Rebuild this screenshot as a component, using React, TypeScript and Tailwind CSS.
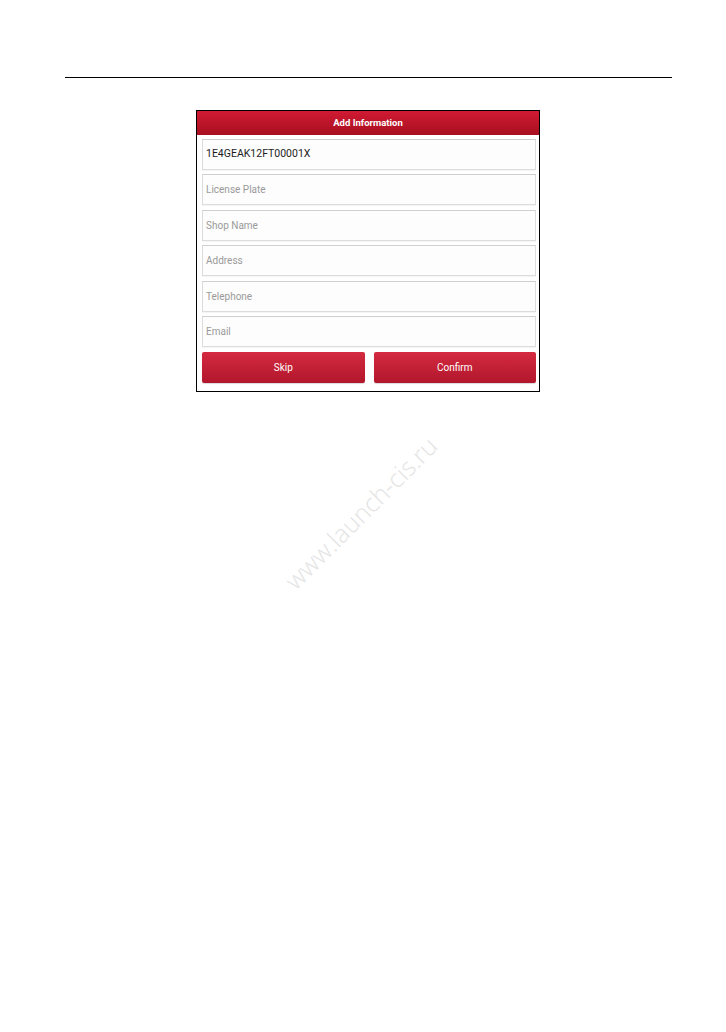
import React from "react";

const fields = [
  { text: "1E4GEAK12FT00001X", filled: true },
  { text: "License Plate" },
  { text: "Shop Name" },
  { text: "Address" },
  { text: "Telephone" },
  { text: "Email" },
];

export default function App() {
  return (
    <div
      className="relative w-[726px] h-[1032px] bg-white overflow-hidden"
      style={{ fontFamily: "Roboto, 'Liberation Sans', sans-serif" }}
    >
      <div className="pt-[77px] pl-[65px]">
        <div className="w-[607px] h-px bg-black" />
      </div>
      <div className="ml-[196px] mt-[32px] w-[344px] h-[282px] border border-black bg-white flex flex-col">
        <div className="h-[24px] bg-gradient-to-b from-[#d01a33] to-[#a8101f] flex items-center justify-center text-white font-bold text-[9.5px]">
          Add Information
        </div>
        <div className="flex flex-col gap-[4.5px] pl-[5px] pr-[3px] pt-[3.5px]">
          {fields.map((f) => (
            <div
              key={f.text}
              className="h-[31px] bg-[#fdfdfd] border border-[#dcdcdc] border-t-[#cfcfcf] flex items-center px-[3px] shadow-[0_1px_1px_rgba(0,0,0,0.04)]"
            >
              <span
                className={
                  f.filled
                    ? "text-[10.5px] text-[#1d1d1d]"
                    : "text-[10px] text-[#9a9a9a]"
                }
              >
                {f.text}
              </span>
            </div>
          ))}
          <div className="flex gap-[9px] h-[31px]">
            <div className="flex-1 rounded-[2px] bg-gradient-to-b from-[#d42a40] to-[#b2162b] flex items-center justify-center text-white text-[10px] shadow-[0_1px_1px_rgba(0,0,0,0.15)]">
              Skip
            </div>
            <div className="flex-1 rounded-[2px] bg-gradient-to-b from-[#d42a40] to-[#b2162b] flex items-center justify-center text-white text-[10px] shadow-[0_1px_1px_rgba(0,0,0,0.15)]">
              Confirm
            </div>
          </div>
        </div>
      </div>
      <div
        className="absolute left-[361px] top-[513px] -translate-x-1/2 -translate-y-1/2 -rotate-45 text-[25px] text-[#e4e4e4] whitespace-nowrap font-light"
        style={{ fontFamily: "'Open Sans', Roboto, sans-serif" }}
      >
        www.launch-cis.ru
      </div>
    </div>
  );
}
